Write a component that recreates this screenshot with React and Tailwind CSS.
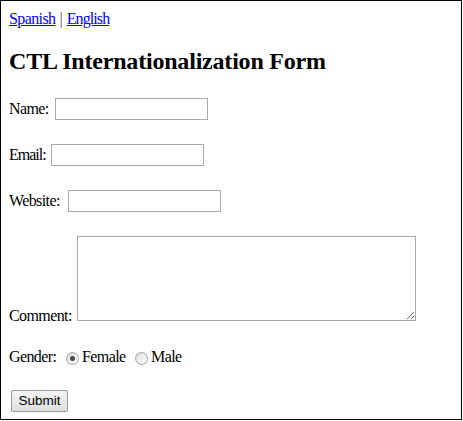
import { useState } from 'react'

const serif = 'font-["Liberation_Serif","Times_New_Roman",serif]'

function Radio({ checked, onClick }) {
  return (
    <span
      onClick={onClick}
      className="mt-[4px] flex h-[13px] w-[13px] shrink-0 cursor-default items-center justify-center rounded-full border border-[#a3a3a3] bg-gradient-to-br from-[#d6d6d6] via-[#eeeeee] to-[#ffffff]"
    >
      {checked && <span className="h-[5px] w-[5px] rounded-full bg-[#4a4a4a]"></span>}
    </span>
  )
}

export default function App() {
  const [gender, setGender] = useState('female')

  return (
    <div className="h-[421px] w-[463px] bg-white">
      <div className={`h-[420px] w-[462px] border border-black px-2 pt-[9px] text-[16px] text-black ${serif}`}>
        <div className="h-[18px] leading-[18px] whitespace-pre">
          <a href="#" className="tracking-[-0.6px] text-[#0000ff] underline">Spanish</a>
          <span className="text-[#555]"> | </span>
          <a href="#" className="tracking-[-0.9px] text-[#0000ff] underline">English</a>
        </div>

        <h2 className="mt-[19px] h-[28px] text-[24px] font-bold leading-[28px] tracking-[-0.2px]">
          CTL Internationalization Form
        </h2>

        <div className="mt-[23px] flex h-[22px] items-center tracking-[-0.6px]">
          <span className="w-[46px] shrink-0 leading-[18px]">Name:</span>
          <input type="text" className="h-[22px] w-[153px] border border-[#a9a9a9] bg-white px-1 outline-none" />
        </div>

        <div className="mt-[24px] flex h-[22px] items-center">
          <span className="w-[42px] shrink-0 leading-[18px] tracking-[-1px]">Email:</span>
          <input type="text" className="h-[22px] w-[153px] border border-[#a9a9a9] bg-white px-1 outline-none" />
        </div>

        <div className="mt-[24px] flex h-[22px] items-center tracking-[-0.6px]">
          <span className="w-[59px] shrink-0 leading-[18px]">Website:</span>
          <input type="text" className="h-[22px] w-[153px] border border-[#a9a9a9] bg-white px-1 outline-none" />
        </div>

        <div className="mt-[24px] flex items-end tracking-[-0.6px]">
          <span className="w-[68px] shrink-0 leading-[18px]">Comment:</span>
          <textarea className="mb-[4px] h-[85px] w-[339px] border border-[#a9a9a9] bg-white outline-none"></textarea>
        </div>

        <div className="mt-[23px] flex h-[18px] items-start leading-[18px] tracking-[-0.6px]">
          <span className="w-[57px] shrink-0">Gender:</span>
          <Radio checked={gender === 'female'} onClick={() => setGender('female')} />
          <span className="ml-[3px] w-[53px] shrink-0">Female</span>
          <Radio checked={gender === 'male'} onClick={() => setGender('male')} />
          <span className="ml-[3px]">Male</span>
        </div>

        <div className="mt-[24px] pl-[2px]">
          <button
            type="button"
            className='flex h-[22px] w-[57px] items-center justify-center rounded-[2px] border border-[#9a9a9a] bg-gradient-to-b from-[#f4f4f4] to-[#dedede] text-[13.5px] text-black font-["Liberation_Sans",Arial,sans-serif]'
          >
            Submit
          </button>
        </div>
      </div>
    </div>
  )
}
